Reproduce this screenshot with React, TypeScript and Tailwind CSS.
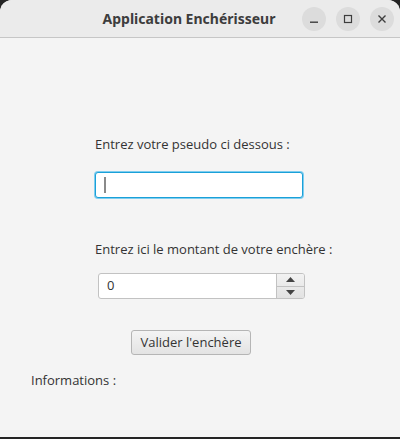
import React from 'react';

function TitleButton({ children }: { children: React.ReactNode }) {
  return (
    <div className="w-[24px] h-[24px] rounded-full bg-[#dcdcdc] flex items-center justify-center">
      {children}
    </div>
  );
}

export default function App() {
  return (
    <div className="w-[400px] h-[439px] bg-[#242424] flex flex-col" style={{ fontFamily: '"Open Sans", "Noto Sans", sans-serif' }}>
      <div className="h-[437px] flex flex-col rounded-t-[12px] overflow-hidden bg-[#f4f4f4]">
        <div className="h-[38px] shrink-0 bg-[#ebebeb] border-b border-[#c6c6c6] relative flex items-center">
          <div className="absolute left-0 right-0 top-[8px] text-center pr-[22px] text-[14px] font-bold text-[#3d3d3d]" style={{ fontFamily: '"Noto Sans", sans-serif' }}>
            Application Enchérisseur
          </div>
          <div className="ml-auto mr-[6px] flex gap-[10px] relative">
            <TitleButton>
              <svg width="10" height="10" viewBox="0 0 10 10"><rect x="1" y="7.5" width="8" height="1.4" fill="#3d3d3d" /></svg>
            </TitleButton>
            <TitleButton>
              <svg width="10" height="10" viewBox="0 0 10 10"><rect x="1.5" y="1.5" width="7" height="7" fill="none" stroke="#3d3d3d" strokeWidth="1.2" /></svg>
            </TitleButton>
            <TitleButton>
              <svg width="10" height="10" viewBox="0 0 10 10"><path d="M1.5 1.5L8.5 8.5M8.5 1.5L1.5 8.5" stroke="#3d3d3d" strokeWidth="1.4" /></svg>
            </TitleButton>
          </div>
        </div>
        <div className="flex-1 flex flex-col text-[13px] text-[#333333]">
          <div className="ml-[95px] mt-[97px] leading-[18px]">Entrez votre pseudo ci dessous :</div>
          <div className="ml-[95px] mt-[19px] w-[208px] h-[26px] rounded-[3px] border border-[#1aa0d8] bg-white shadow-[0_0_0_1px_#7fcdef] flex items-center pl-[8px]">
            <div className="w-[2px] h-[16px] bg-[#8a8a8a]" />
          </div>
          <div className="ml-[95px] mt-[42px] leading-[18px]">Entrez ici le montant de votre enchère :</div>
          <div className="ml-[98px] mt-[15px] w-[207px] h-[26px] flex rounded-[3px] border border-[#c2c2c2] bg-white overflow-hidden">
            <div className="flex-1 flex items-center pl-[8px] text-[#333]">0</div>
            <div className="w-[28px] flex flex-col border-l border-[#c2c2c2] bg-gradient-to-b from-[#f2f2f2] to-[#e2e2e2]">
              <div className="flex-1 flex items-center justify-center border-b border-[#c2c2c2]">
                <svg width="9" height="5" viewBox="0 0 9 5"><path d="M0 5L4.5 0L9 5Z" fill="#444" /></svg>
              </div>
              <div className="flex-1 flex items-center justify-center">
                <svg width="9" height="5" viewBox="0 0 9 5"><path d="M0 0L9 0L4.5 5Z" fill="#444" /></svg>
              </div>
            </div>
          </div>
          <div className="ml-[131px] mt-[31px] w-[120px] h-[25px] rounded-[3px] border border-[#b5b5b5] bg-gradient-to-b from-[#f4f4f4] to-[#e3e3e3] flex items-center justify-center">
            Valider l'enchère
          </div>
          <div className="ml-[31px] mt-[16px] leading-[18px]">Informations :</div>
        </div>
      </div>
    </div>
  );
}
